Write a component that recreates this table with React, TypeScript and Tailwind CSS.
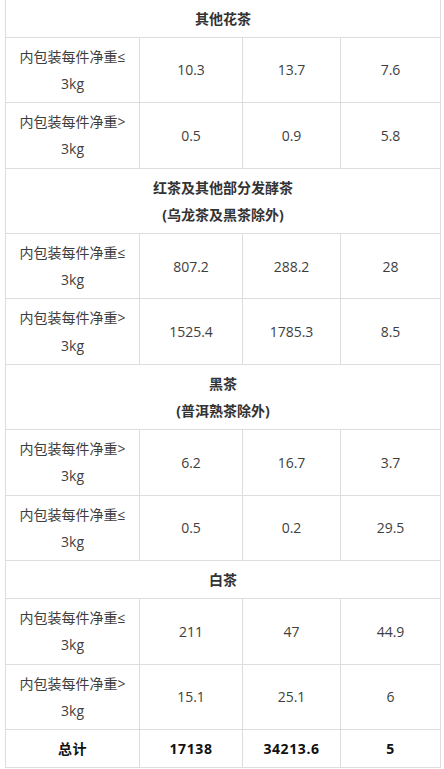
import { Fragment } from "react"

type Row = { label: string; values: string[] }
type Section = { title: string[]; rows: Row[] }

const LE = "内包装每件净重≤"
const GT = "内包装每件净重>"

const sections: Section[] = [
  {
    title: ["其他花茶"],
    rows: [
      { label: LE, values: ["10.3", "13.7", "7.6"] },
      { label: GT, values: ["0.5", "0.9", "5.8"] },
    ],
  },
  {
    title: ["红茶及其他部分发酵茶", "(乌龙茶及黑茶除外)"],
    rows: [
      { label: LE, values: ["807.2", "288.2", "28"] },
      { label: GT, values: ["1525.4", "1785.3", "8.5"] },
    ],
  },
  {
    title: ["黑茶", "(普洱熟茶除外)"],
    rows: [
      { label: GT, values: ["6.2", "16.7", "3.7"] },
      { label: LE, values: ["0.5", "0.2", "29.5"] },
    ],
  },
  {
    title: ["白茶"],
    rows: [
      { label: LE, values: ["211", "47", "44.9"] },
      { label: GT, values: ["15.1", "25.1", "6"] },
    ],
  },
]

const cell = "border border-[#dddddd] px-[6px] py-[5px] text-center align-middle"

export default function App() {
  return (
    <div
      className="min-h-[769px] bg-white pl-[5px] pr-[4px] text-[14px] leading-[27.2px] text-[#3e3e3e]"
      style={{ fontFamily: '"Open Sans", "Noto Sans CJK SC", sans-serif' }}
    >
      <table className="-mt-[1.5px] w-[435px] table-fixed border-collapse">
        <colgroup>
          <col className="w-[134px]" />
          <col className="w-[103px]" />
          <col className="w-[98px]" />
          <col className="w-[100px]" />
        </colgroup>
        <tbody>
          {sections.map((s) => (
            <Fragment key={s.title[0]}>
              <tr>
                <td colSpan={4} className={`${cell} font-bold text-[#333]`}>
                  {s.title.map((t) => (
                    <div key={t}>{t}</div>
                  ))}
                </td>
              </tr>
              {s.rows.map((r, i) => (
                <tr key={i}>
                  <td className={cell}>
                    <div>{r.label}</div>
                    <div>3kg</div>
                  </td>
                  {r.values.map((v, j) => (
                    <td key={j} className={cell}>
                      {v}
                    </td>
                  ))}
                </tr>
              ))}
            </Fragment>
          ))}
          <tr className="font-bold tracking-[0.6px] text-[#111]">
            <td className={cell}>总计</td>
            <td className={cell}>17138</td>
            <td className={cell}>34213.6</td>
            <td className={cell}>5</td>
          </tr>
        </tbody>
      </table>
    </div>
  )
}
